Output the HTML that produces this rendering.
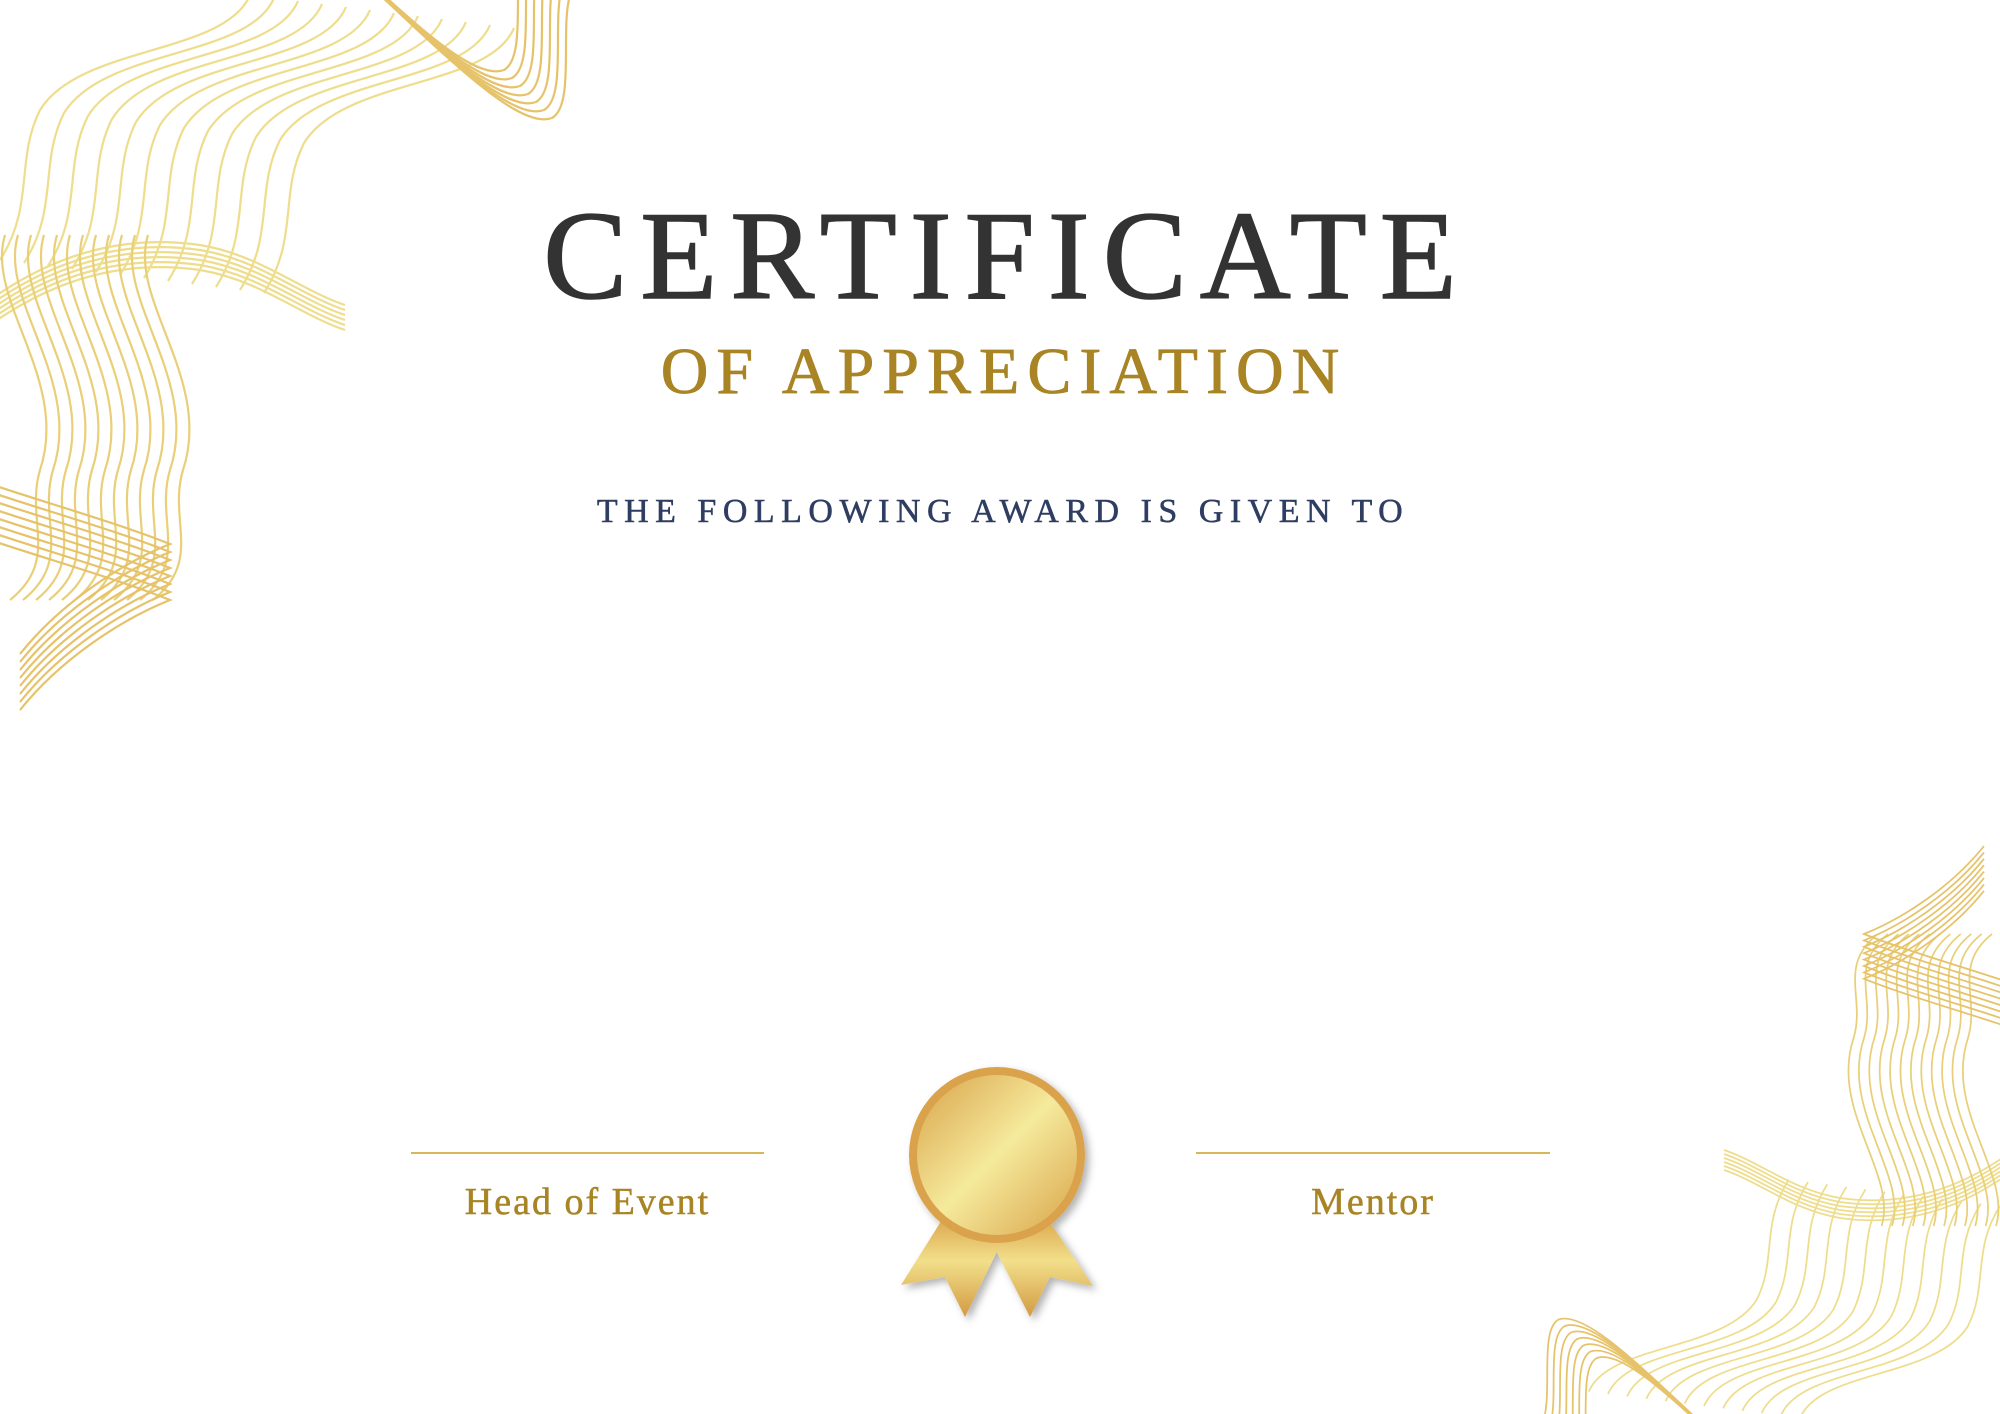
<!DOCTYPE html>
<html><head><meta charset="utf-8"><style>
html,body{margin:0;padding:0;background:#fff;}
body{width:2000px;height:1414px;position:relative;overflow:hidden;font-family:"Liberation Serif",serif;}
.t{position:absolute;left:0;width:2000px;text-align:center;line-height:1;white-space:nowrap;}
</style></head><body>
<svg width="2000" height="1414" style="position:absolute;left:0;top:0" viewBox="0 0 2000 1414">
<defs>
<path id="a" d="M250 -5 C225 55 80 45 40 110 C15 160 35 205 0 260" fill="none" stroke-width="2.2"/>
<path id="b" d="M-10 300 C60 250 130 235 200 245 C260 255 300 290 345 305" fill="none" stroke-width="2.2"/>
<path id="c" d="M5 235 C-15 300 70 380 40 470 C25 520 60 560 10 600" fill="none" stroke-width="2.2"/>
<path id="d" d="M-10 540 C50 560 120 580 170 600 C120 620 60 660 20 710" fill="none" stroke-width="2.2"/>
<path id="e" d="M380 -5 C450 60 520 130 552 118 C575 105 560 30 570 -5" fill="none" stroke-width="2.2"/>
<g id="wave">
<g stroke="#eedd8c">
<use href="#a"/><use href="#a" transform="translate(24,3)"/><use href="#a" transform="translate(48,6)"/><use href="#a" transform="translate(72,9)"/><use href="#a" transform="translate(96,12)"/><use href="#a" transform="translate(120,15)"/><use href="#a" transform="translate(144,18)"/><use href="#a" transform="translate(168,21)"/><use href="#a" transform="translate(192,24)"/><use href="#a" transform="translate(216,27)"/><use href="#a" transform="translate(240,30)"/><use href="#a" transform="translate(264,33)"/>
<use href="#b"/><use href="#b" transform="translate(0,5)"/><use href="#b" transform="translate(0,10)"/><use href="#b" transform="translate(0,15)"/><use href="#b" transform="translate(0,20)"/><use href="#b" transform="translate(0,25)"/>
</g>
<g stroke="#e9cf78">
<use href="#c"/><use href="#c" transform="translate(13,0)"/><use href="#c" transform="translate(26,0)"/><use href="#c" transform="translate(39,0)"/><use href="#c" transform="translate(52,0)"/><use href="#c" transform="translate(65,0)"/><use href="#c" transform="translate(78,0)"/><use href="#c" transform="translate(91,0)"/><use href="#c" transform="translate(104,0)"/><use href="#c" transform="translate(117,0)"/><use href="#c" transform="translate(130,0)"/><use href="#c" transform="translate(143,0)"/>
</g>
<g stroke="#e6c36a">
<use href="#d"/><use href="#d" transform="translate(0,-8)"/><use href="#d" transform="translate(0,-16)"/><use href="#d" transform="translate(0,-24)"/><use href="#d" transform="translate(0,-32)"/><use href="#d" transform="translate(0,-40)"/><use href="#d" transform="translate(0,-48)"/><use href="#d" transform="translate(0,-56)"/>
<use href="#e"/><use href="#e" transform="translate(-8,-8)"/><use href="#e" transform="translate(-16,-16)"/><use href="#e" transform="translate(-24,-24)"/><use href="#e" transform="translate(-32,-32)"/><use href="#e" transform="translate(-40,-40)"/><use href="#e" transform="translate(-48,-48)"/>
</g>
</g>
<linearGradient id="g1" x1="0" y1="0" x2="1" y2="1">
<stop offset="0" stop-color="#d9a34a"/><stop offset="0.5" stop-color="#f5ea9c"/><stop offset="1" stop-color="#d9a34a"/>
</linearGradient>
<linearGradient id="g2" x1="0" y1="0" x2="0" y2="1">
<stop offset="0" stop-color="#d9a34a"/><stop offset="0.45" stop-color="#f2df8a"/><stop offset="1" stop-color="#d39a44"/>
</linearGradient>
<filter id="sh"><feDropShadow dx="4" dy="4" stdDeviation="4" flood-opacity="0.3"/></filter>
</defs>
<use href="#wave"/>
<g transform="translate(2000,1414) rotate(180) scale(0.8)"><use href="#wave"/></g>
<line x1="411" y1="1153" x2="764" y2="1153" stroke="#d7b75a" stroke-width="2"/>
<line x1="1196" y1="1153" x2="1550" y2="1153" stroke="#d7b75a" stroke-width="2"/>
<g filter="url(#sh)">
<path d="M945 1215 L901 1285 L945 1277 L965 1317 L1005 1235 Z" fill="url(#g2)"/>
<path d="M1045 1215 L1093 1286 L1050 1277 L1030 1317 L988 1235 Z" fill="url(#g2)"/>
<circle cx="997" cy="1155" r="88" fill="#daa24c"/>
<circle cx="997" cy="1155" r="80" fill="url(#g1)"/>
</g>
</svg>
<div class="t" style="top:194px;font-size:126px;color:#333;letter-spacing:13px;text-indent:13px;-webkit-text-stroke:1.5px #333;">CERTIFICATE</div>
<div class="t" style="top:339px;font-size:66px;color:#a88424;letter-spacing:8px;text-indent:8px;-webkit-text-stroke:0.8px #a88424;">OF APPRECIATION</div>
<div class="t" style="top:495px;font-size:34px;color:#2f3d62;letter-spacing:6.5px;text-indent:6px;-webkit-text-stroke:0.5px #2f3d62;">THE FOLLOWING AWARD IS GIVEN TO</div>
<div class="t" style="top:1183px;left:411px;width:353px;font-size:38px;color:#a88424;letter-spacing:2px;-webkit-text-stroke:0.5px #a88424;">Head of Event</div>
<div class="t" style="top:1183px;left:1196px;width:354px;font-size:38px;color:#a88424;letter-spacing:2px;-webkit-text-stroke:0.5px #a88424;">Mentor</div>
</body></html>
